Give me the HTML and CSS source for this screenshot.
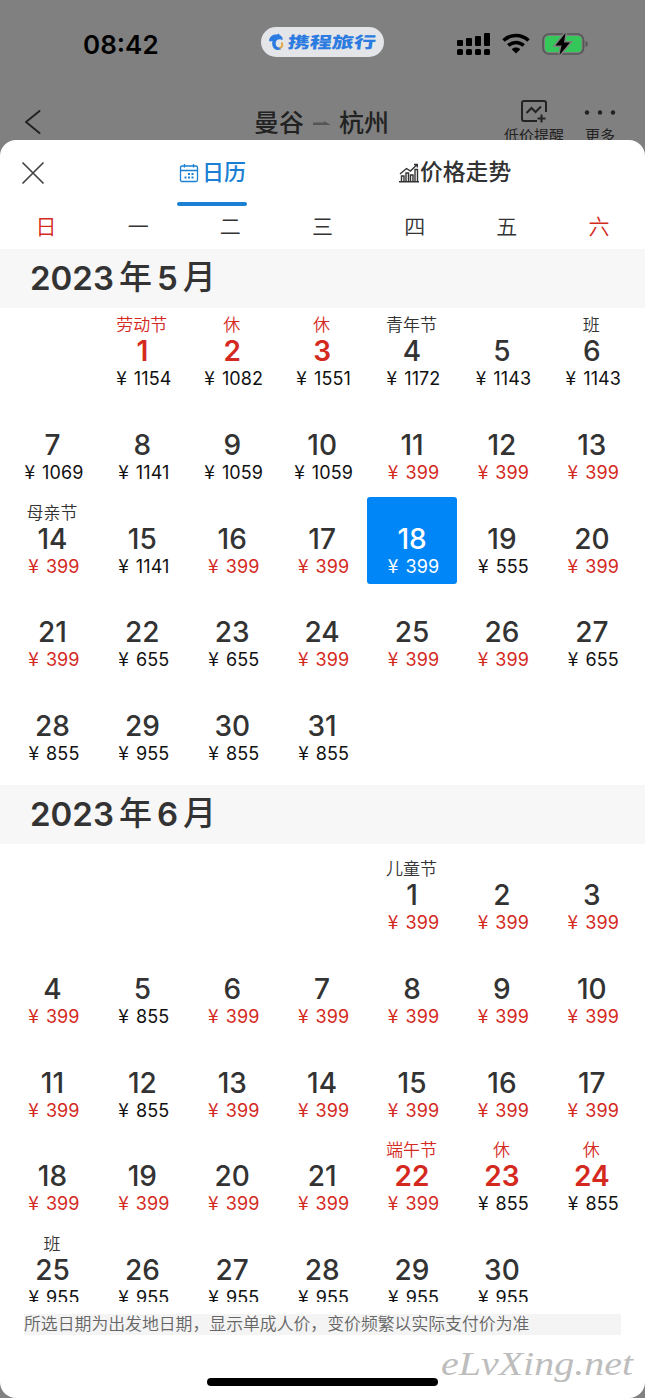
FILE: index.html
```
<!DOCTYPE html>
<html lang="zh-CN">

<head>
    <meta charset="UTF-8">
    <meta name="viewport" content="width=device-width, initial-scale=1.0">
    <title>日历</title>
    <link rel="stylesheet" href="styles.css">
</head>

<body>
    <header>
        <div class="status">
            <span class="time">08:42</span>
            <div class="brand">
                <svg width="17" height="18" viewBox="0 0 17 18">
                    <path d="M1 7 C2 3 5 1 9 1.500 L11 .5 L11.500 2 C14 3 15 5 14.500 7 C12 5.500 9 6 8 8.500 C7 12 8.500 14.500 12 14.500 L13 16.500 C7 18.500 3 14 4.500 8 L1.500 8.500 Z" fill="#2b7be0"/>
                    <path d="M11.500 15 C14.500 14.500 15 12 13.500 9.500" fill="none" stroke="#dfa744" stroke-width="2"/>
                </svg>
                <span>携程旅行</span>
            </div>
            <svg class="signal" width="34" height="24" viewBox="0 0 34 24">
                <rect x="0" y="8" width="6" height="6" rx="1"/>
                <rect x="9" y="6" width="6" height="8" rx="1"/>
                <rect x="18" y="4" width="6" height="10" rx="1"/>
                <rect x="27" y="1" width="6" height="13" rx="1"/>
                <rect x="0" y="17" width="6" height="6" rx="1.5"/>
                <rect x="9" y="17" width="6" height="6" rx="1.5"/>
                <rect x="18" y="17" width="6" height="6" rx="1.5"/>
                <rect x="27" y="17" width="6" height="6" rx="1.5"/>
            </svg>
            <svg class="wifi" width="28" height="21" viewBox="0 0 28 21">
                <path d="M1.5 7.5 C8.500 .8 19.500 .8 26.500 7.500 M6.300 12.500 C10.700 8.400 17.300 8.400 21.700 12.500" fill="none" stroke="#000" stroke-width="3.600"/>
                <path d="M14 20.500 L9.700 16.200 C12 14 16 14 18.300 16.200 Z"/>
            </svg>
            <svg class="battery" width="48" height="24" viewBox="0 0 48 24">
                <rect x="1" y="2" width="40.500" height="20" rx="6" fill="none" stroke="#555" stroke-width="1.700"/>
                <rect x="3" y="4" width="36.500" height="16" rx="4" fill="#35c759"/>
                <path d="M43.500 9 C46.500 10 46.500 14 43.500 15 Z" fill="#555"/>
                <path d="M23.500 1 L13.500 13.500 H19.500 L17.500 23 L28 10.500 H22 Z" stroke="#808080" stroke-width="3" paint-order="stroke"/>
            </svg>
        </div>
        <div class="nav">
            <svg class="back" width="18" height="26" viewBox="0 0 18 26">
                <path d="M15.500 2 L2 13 L15.500 24" fill="none" stroke="#222" stroke-width="2" stroke-linecap="round" stroke-linejoin="round"/>
            </svg>
            <div class="route">
                <span>曼谷</span>
                <svg width="17" height="6" viewBox="0 0 17 6">
                    <path d="M0 2.500 H11 V1 L17 4.500 V5 H0 Z" fill="#555"/>
                </svg>
                <span>杭州</span>
            </div>
            <div class="tool alert">
                <svg width="28" height="24" viewBox="0 0 28 24">
                    <path d="M17 22 H4 Q2 22 2 20 V4 Q2 2 4 2 H24 Q26 2 26 4 V13 M6.500 14 L11.500 9 L15.500 13 L21 7.500 M21.500 15.500 V23.500 M17.500 19.500 H25.500" fill="none" stroke="#222" stroke-width="2"/>
                </svg>
                <span>低价提醒</span>
            </div>
            <div class="tool more">
                <svg width="32" height="24" viewBox="0 0 32 24" fill="#222">
                    <circle cx="3" cy="13.500" r="2.200"/>
                    <circle cx="16" cy="13.500" r="2.200"/>
                    <circle cx="29" cy="13.500" r="2.200"/>
                </svg>
                <span>更多</span>
            </div>
        </div>
    </header>

    <div id="sheet">
        <div class="tabs">
            <svg class="close" width="24" height="24" viewBox="0 0 24 24">
                <path d="M1.500 1.500 L22.500 22.500 M22.500 1.500 L1.500 22.500" stroke="#444" stroke-width="1.700"/>
            </svg>
            <div class="tab active">
                <svg width="20" height="20" viewBox="0 0 20 20">
                    <path d="M3 3 H17 Q18.500 3 18.500 4.500 V17 Q18.500 18.500 17 18.500 H3 Q1.500 18.500 1.500 17 V4.500 Q1.500 3 3 3 Z M1.500 7.500 H18.500 M5.500 1 V4.500 M14.500 1 V4.500" fill="none" stroke="#1b80d3" stroke-width="1.300"/>
                    <path d="M9 11 H11 M12.500 11 H14.500 M5.500 14.500 H7.500 M9 14.500 H11 M12.500 14.500 H14.500" stroke="#1b80d3" stroke-width="1.800"/>
                </svg>
                <span>日历</span>
            </div>
            <div class="tab">
                <svg width="21" height="20" viewBox="0 0 21 20">
                    <path d="M0 18.800 H20 M2.500 18 V13 H5 V18 M7 18 V10 H9.500 V18 M11.500 18 V12 H14 V18 M16 18 V6.500 H18.500 V18 M1 11 L7.500 5.500 L11.500 8 L18 1.500 M15 1.500 H18.300 V4.500" fill="none" stroke="#333" stroke-width="1.400"/>
                </svg>
                <span>价格走势</span>
            </div>
        </div>
        <div class="week">
            <span class="red">日</span>
            <span>一</span>
            <span>二</span>
            <span>三</span>
            <span>四</span>
            <span>五</span>
            <span class="red">六</span>
        </div>
        <div id="calendar">
            <h2>2023<i>年</i>5<i>月</i></h2>
            <div class="month" id="may"></div>
            <h2>2023<i>年</i>6<i>月</i></h2>
            <div class="month june" id="june"></div>
        </div>
        <p class="note">所选日期为出发地日期，显示单成人价，变价频繁以实际支付价为准</p>
        <div class="home"></div>
        <svg class="mark" width="200" height="48" viewBox="0 0 200 48">
            <text x="2" y="29" textLength="192" lengthAdjust="spacingAndGlyphs">eLvXing.net</text>
        </svg>
    </div>

    <script>
        var may = {
            start: 1,
            prices: [1154, 1082, 1551, 1172, 1143, 1143,
                1069, 1141, 1059, 1059, 399, 399, 399,
                399, 1141, 399, 399, 399, 555, 399,
                399, 655, 655, 399, 399, 399, 655,
                855, 955, 855, 855],
            tags: { 1: '劳动节', 2: '休', 3: '休', 4: '青年节', 6: '班', 14: '母亲节' },
            holidays: [1, 2, 3],
            selected: 18
        };

        var june = {
            start: 4,
            prices: [399, 399, 399,
                399, 855, 399, 399, 399, 399, 399,
                399, 855, 399, 399, 399, 399, 399,
                399, 399, 399, 399, 399, 855, 855,
                955, 955, 955, 955, 955, 955],
            tags: { 1: '儿童节', 22: '端午节', 23: '休', 24: '休', 25: '班' },
            holidays: [22, 23, 24]
        };

        function add_span(cell, name, text) {
            var span = document.createElement('span');
            span.className = name;
            span.textContent = text;
            cell.append(span);
            return span;
        }

        function draw_month(id, month) {
            var box = document.querySelector(id);
            for (let i = 0; i < month.start; i++) {
                box.append(document.createElement('div'));
            }
            for (let i = 0; i < month.prices.length; i++) {
                var day = i + 1;
                var cell = document.createElement('div');
                cell.className = 'day';
                if (month.holidays.includes(day)) {
                    cell.classList.add('holiday');
                }
                if (month.prices[i] == 399) {
                    cell.classList.add('low');
                }
                if (month.selected == day) {
                    cell.classList.add('selected');
                }
                add_span(cell, 'tag', month.tags[day] || '');
                add_span(cell, 'date', day);
                var price = add_span(cell, 'price', '');
                add_span(price, 'yen', '¥');
                price.append(month.prices[i]);
                box.append(cell);
            }
        }

        draw_month('#may', may);
        draw_month('#june', june);
    </script>
</body>

</html>
```
FILE: styles.css
```
* {
    box-sizing: border-box;
}

body {
    margin: 0;
    height: 1398px;
    overflow: hidden;
    background-color: #808080;
    color: #333;
    font-family: Inter, "Noto Sans CJK SC", sans-serif;
}

svg {
    display: block;
    flex-shrink: 0;
}

header {
    height: 140px;
    overflow: hidden;
}

.status {
    display: flex;
    align-items: center;
    height: 60px;
    padding: 27px 0 0 83px;
    color: #000;
}

.time {
    width: 178px;
    font-size: 26px;
    font-weight: 600;
    line-height: 33px;
    padding-top: 1px;
}

.brand {
    display: flex;
    align-items: center;
    width: 123px;
    height: 30px;
    margin-top: -4px;
    padding-left: 7px;
    gap: 3px;
    border-radius: 15px;
    background-color: #e3e5e8;
}

.brand span {
    color: #2b7be0;
    font-size: 22px;
    font-weight: 900;
    line-height: 30px;
    white-space: nowrap;
    transform: scaleY(0.72) skewX(-5deg);
}

.signal {
    margin-left: 73px;
}

.wifi {
    margin-left: 11px;
}

.battery {
    margin-left: 12px;
}

.nav {
    display: flex;
    height: 80px;
    padding: 39px 0 0 24px;
    color: #222;
}

.back {
    margin-top: 10px;
}

.route {
    display: flex;
    align-items: center;
    width: 137px;
    height: 48px;
    margin-left: 212px;
    gap: 9px;
    font-size: 25px;
    font-weight: 500;
    line-height: 48px;
    white-space: nowrap;
}

.tool {
    display: flex;
    flex-direction: column;
    align-items: center;
    font-size: 15px;
    line-height: 22px;
    white-space: nowrap;
}

.alert {
    width: 62px;
    margin-left: 112px;
}

.more {
    width: 40px;
    margin-left: 15px;
}

.tool span {
    margin-top: 2px;
}

#sheet {
    position: relative;
    height: 1258px;
    overflow: hidden;
    border-radius: 16px;
    background-color: #fff;
}

.tabs {
    display: flex;
    height: 66px;
    padding-left: 21px;
}

.close {
    margin-top: 21px;
}

.tab {
    display: flex;
    align-items: center;
    height: 66px;
    font-size: 22.8px;
    font-weight: 500;
    line-height: 30px;
    margin-left: 152px;
}

.tab.active {
    width: 70px;
    margin-left: 132px;
    padding-left: 2px;
    gap: 3px;
    color: #1b80d3;
    font-size: 22px;
    position: relative;
}

.active::after {
    content: "";
    position: absolute;
    left: 0;
    bottom: 0;
    width: 70px;
    height: 4px;
    border-radius: 2px;
    background-color: #1b80d3;
}

.tab span {
    margin-top: -2px;
    white-space: nowrap;
}

.week {
    display: grid;
    grid-template-columns: repeat(7, 1fr);
    height: 43px;
    font-size: 21px;
    font-weight: 350;
    line-height: 42px;
    text-align: center;
}

.red {
    color: #d4291e;
}

#calendar {
    height: 1053px;
    overflow: hidden;
}

h2 {
    display: flex;
    align-items: center;
    height: 59px;
    margin: 0;
    padding-left: 30px;
    background-color: #f7f7f7;
    font-size: 33px;
    font-weight: 600;
    line-height: 59px;
}

h2 i {
    margin: -2px 5px 0;
    font-size: 33px;
    font-style: normal;
    font-weight: 500;
}

.month {
    display: grid;
    grid-template-columns: repeat(7, 89.9px);
    grid-auto-rows: 87px;
    row-gap: 6.75px;
    padding: 1px 0 14px 7.5px;
}

.june {
    padding-top: 9px;
}

.day {
    display: flex;
    flex-direction: column;
    align-items: center;
    padding-top: 2px;
    border-radius: 3px;
}

.tag {
    height: 27px;
    margin-left: -1px;
    font-size: 17px;
    font-weight: 350;
    line-height: 28px;
}

.date {
    height: 26px;
    font-size: 28px;
    font-weight: 500;
    line-height: 27px;
}

.price {
    height: 28px;
    padding-left: 3px;
    color: #111;
    font-size: 18px;
    line-height: 25px;
    letter-spacing: 0.1px;
    white-space: nowrap;
}

.yen {
    margin-right: 7px;
    font-family: "Noto Sans CJK SC", sans-serif;
    font-size: 19px;
}

.holiday .tag,
.holiday .date,
.low .price {
    color: #d4291e;
}

.holiday .date {
    font-weight: 600;
}

.selected {
    background-color: #0086f6;
    color: #fff;
}

.selected .price {
    color: #fff;
}

.note {
    width: 597px;
    height: 21px;
    margin: 12px 0 0 24px;
    background-color: #f4f4f4;
    color: #666;
    font-size: 16.85px;
    font-weight: 350;
    line-height: 21px;
    white-space: nowrap;
}

.home {
    width: 231px;
    height: 8px;
    margin: 43px 0 0 207px;
    border-radius: 4px;
    background-color: #000;
}

/* site mark over the bottom right corner */
.mark {
    position: absolute;
    right: 6px;
    bottom: 4px;
    fill: #bdbdbd;
    font-family: "Liberation Serif", serif;
    font-size: 33px;
    font-style: italic;
}
```
